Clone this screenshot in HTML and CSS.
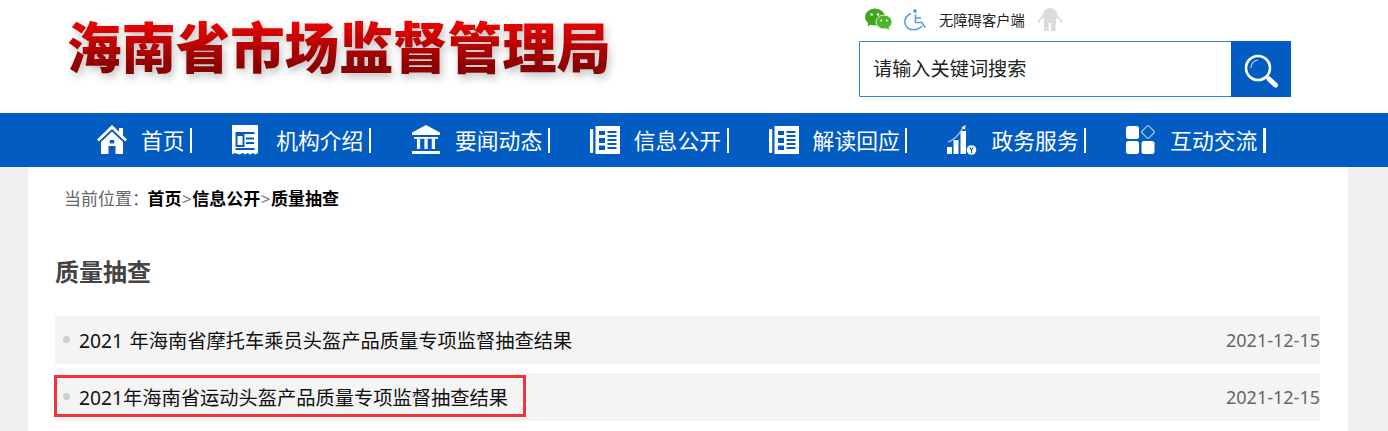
FILE: index.html
```html
<!DOCTYPE html>
<html lang="zh-CN">
<head>
  <meta charset="UTF-8">
  <title>质量抽查 - 海南省市场监督管理局</title>
  <link rel="stylesheet" href="styles.css">
</head>
<body>
  <header class="top">
    <div class="logo">海南省市场监督管理局</div>
    <div class="top-right">
      <div class="tools">
        <svg class="icon-wechat" viewBox="0 0 27 22">
          <ellipse cx="10" cy="9" rx="10" ry="8.6" fill="#3fa51c"/>
          <path d="M3.5 14l-.8 4.5 4.600-3z" fill="#3fa51c"/>
          <ellipse cx="19" cy="14" rx="8" ry="7" fill="#4fb52a" stroke="#fff" stroke-width=".8"/>
          <path d="M23.500 19l1 3-3.600-2z" fill="#4fb52a"/>
          <circle cx="6.600" cy="6.500" r="1.300" fill="#fff"/>
          <circle cx="13" cy="6.500" r="1.300" fill="#fff"/>
          <circle cx="16.200" cy="12.500" r="1.100" fill="#fff"/>
          <circle cx="21.800" cy="12.500" r="1.100" fill="#fff"/>
        </svg>
        <svg class="icon-access" viewBox="0 0 23 23" fill="none" stroke="#5b9ee0" stroke-width="1.600">
          <circle cx="11" cy="3" r="1.900" fill="#5b9ee0" stroke="none"/>
          <path d="M11.500 6.500v8h6.500l3 5"/>
          <path d="M11.500 10h5.500"/>
          <path d="M7 5.500C2.500 7.500.8 11 .8 14c0 4.500 4 7.700 8 7.700 3.500 0 7-1 9-3.700"/>
        </svg>
        <span class="tools-text">无障碍客户端</span>
        <svg class="icon-robot" viewBox="0 0 24 23" fill="#dcdcdc">
          <circle cx="12" cy="7.500" r="7.500"/>
          <rect x="6" y="9" width="12" height="6"/>
          <rect x="6" y="15" width="4.500" height="8"/>
          <rect x="13" y="15" width="4.500" height="8"/>
          <path d="M5 8L.7 12.500V15M19 8l4.300 4.500V15" fill="none" stroke="#dcdcdc" stroke-width="1.800"/>
        </svg>
      </div>
      <div class="search">
        <div class="search-input">请输入关键词搜索</div>
        <div class="search-btn">
          <svg viewBox="0 0 60 56" width="60" height="56" fill="none" stroke="#fff">
            <circle cx="27" cy="27" r="12" stroke-width="2.600"/>
            <path d="M20 27a7.500 7.500 0 0 1 7-8" stroke-width="1.200" stroke-opacity=".7"/>
            <path d="M38 38l6.500 6" stroke-width="5" stroke-linecap="round"/>
          </svg>
        </div>
      </div>
    </div>
  </header>

  <nav class="nav">
    <div class="nav-item">
      <svg viewBox="0 0 30 30" fill="#fff">
        <path d="M15 0L0 14.500l1.800 2L15 4l13.200 12.500 1.800-2-4-3.900V3h-4v3.800z"/>
        <path d="M15 6.500L4 17v12h7.500v-8h7v8H26V17z"/>
        <rect x="12.800" y="15" width="4.400" height="3.400" fill="#035cc2"/>
      </svg>
      <span class="nav-text">首页</span>
    </div>
    <div class="nav-item">
      <svg viewBox="0 0 26 30" fill="#fff" class="icon-narrow">
        <path d="M0 0h26v28l-2.600 1.500-2.600-1.500-2.600 1.500-2.600-1.500-2.600 1.500-2.600-1.500-2.600 1.500L2.600 28 0 29.500z"/>
        <g fill="#035cc2">
          <rect x="3.500" y="7" width="19" height="2"/>
          <rect x="4.500" y="10" width="7" height="11" fill="none" stroke="#035cc2" stroke-width="2"/>
          <rect x="14" y="12.500" width="8" height="2"/>
          <rect x="14" y="17" width="8" height="2"/>
          <rect x="3.500" y="23" width="19" height="2"/>
        </g>
      </svg>
      <span class="nav-text">机构介绍</span>
    </div>
    <div class="nav-item">
      <svg viewBox="0 0 30 30" fill="#fff">
        <path d="M15 0L1 7.500V10h28V7.500z"/>
        <rect x="3" y="12" width="24" height="1.800"/>
        <rect x="6" y="14" width="3.200" height="10"/>
        <rect x="13.400" y="14" width="3.200" height="10"/>
        <rect x="20.800" y="14" width="3.200" height="10"/>
        <rect x="1" y="26" width="28" height="3"/>
      </svg>
      <span class="nav-text">要闻动态</span>
    </div>
    <div class="nav-item">
      <svg viewBox="0 0 30 30" fill="#fff">
        <rect x="0" y="4" width="3.200" height="24" rx="1"/>
        <path d="M5.500 1H30v28H5.500z"/>
        <g fill="#035cc2">
          <rect x="9" y="6" width="6" height="4"/><rect x="17.500" y="6" width="9" height="2"/><rect x="17.500" y="10" width="9" height="2"/>
          <rect x="9" y="13" width="6" height="5"/><rect x="17.500" y="14" width="9" height="2"/><rect x="17.500" y="18" width="9" height="2"/>
          <rect x="9" y="20.500" width="6" height="4.500"/><rect x="17.500" y="22" width="9" height="2"/>
        </g>
      </svg>
      <span class="nav-text">信息公开</span>
    </div>
    <div class="nav-item">
      <svg viewBox="0 0 30 30" fill="#fff">
        <rect x="0" y="4" width="3.200" height="24" rx="1"/>
        <path d="M5.500 1H30v28H5.500z"/>
        <g fill="#035cc2">
          <rect x="9" y="6" width="6" height="4"/><rect x="17.500" y="6" width="9" height="2"/><rect x="17.500" y="10" width="9" height="2"/>
          <rect x="9" y="13" width="6" height="5"/><rect x="17.500" y="14" width="9" height="2"/><rect x="17.500" y="18" width="9" height="2"/>
          <rect x="9" y="20.500" width="6" height="4.500"/><rect x="17.500" y="22" width="9" height="2"/>
        </g>
      </svg>
      <span class="nav-text">解读回应</span>
    </div>
    <div class="nav-item">
      <svg viewBox="0 0 30 30" fill="#fff">
        <rect x="0" y="22" width="5" height="7"/>
        <rect x="6.500" y="15" width="5" height="14"/>
        <rect x="13.500" y="6" width="5.500" height="23"/>
        <path d="M1 17C8 15 13 8 16.500 2.500" fill="none" stroke="#c9dcf3" stroke-width="1.200"/>
        <path d="M18.500 0l-.3 4.800-3.800-2.400z"/>
        <circle cx="24.500" cy="25" r="4.800"/>
        <path d="M22.800 22.500l1.700 2.600 1.700-2.600M24.500 25v3.200" fill="none" stroke="#035cc2" stroke-width="1.100"/>
      </svg>
      <span class="nav-text">政务服务</span>
    </div>
    <div class="nav-item nav-item-last">
      <svg viewBox="0 0 30 30" fill="#fff">
        <rect x="0" y="1" width="13" height="13" rx="2.500"/>
        <rect x="0" y="16" width="13" height="13" rx="2.500"/>
        <rect x="15.500" y="16" width="13" height="13" rx="2.500"/>
        <rect x="17.200" y="2.200" width="9.600" height="9.600" rx="1" transform="rotate(45 22 7)" fill="none" stroke="#a9c6ea" stroke-width="1.200"/>
      </svg>
      <span class="nav-text">互动交流</span>
    </div>
  </nav>

  <main class="page">
    <div class="crumb">
      <span class="crumb-label">当前位置：</span>
      <b>首页</b><span class="crumb-sep">&gt;</span><b>信息公开</b><span class="crumb-sep">&gt;</span><b>质量抽查</b>
    </div>
    <h2 class="title">质量抽查</h2>
    <ul class="list">
      <li class="row">
        <span class="row-title">2021 年海南省摩托车乘员头盔产品质量专项监督抽查结果</span>
        <span class="row-date">2021-12-15</span>
      </li>
      <li class="row">
        <span class="row-title">2021年海南省运动头盔产品质量专项监督抽查结果</span>
        <span class="row-date">2021-12-15</span>
        <div class="row-mark"></div>
      </li>
    </ul>
  </main>
</body>
</html>
```

FILE: styles.css
```css
* {
  box-sizing: border-box;
}
html, body {
  margin: 0;
  padding: 0;
}
body {
  background: #f0f0f0;
  color: #222;
  font-family: "Noto Sans", "Noto Sans CJK SC", sans-serif;
  overflow: hidden;
}

.top {
  display: flex;
  justify-content: space-between;
  height: 113px;
  padding: 0 97px 0 67px;
  background: #fff;
}
.logo {
  margin-top: 14px;
  height: 62px;
  font-family: "Noto Sans CJK SC", sans-serif;
  font-size: 54.400px;
  font-weight: 900;
  line-height: 62px;
  white-space: nowrap;
  color: transparent;
  background: linear-gradient(#e60404 15%, #8a0202 85%);
  -webkit-background-clip: text;
  background-clip: text;
  filter: drop-shadow(2px 4px 4px rgba(0, 0, 0, .25));
}
.top-right {
  width: 432px;
  padding-top: 7px;
}
.tools {
  display: flex;
  align-items: center;
  height: 24px;
  padding-left: 6px;
}
.icon-wechat {
  width: 27px;
  height: 22px;
}
.icon-access {
  width: 23px;
  height: 23px;
  margin-left: 12px;
}
.icon-robot {
  width: 24px;
  height: 23px;
  margin-left: 13px;
}
.tools-text {
  margin-left: 12px;
  font-size: 14.300px;
  color: #222;
  white-space: nowrap;
}
.search {
  display: flex;
  height: 56px;
  margin-top: 10px;
  border: 1px solid #2a86d6;
  border-radius: 1px;
}
.search-input {
  flex: 1;
  padding-left: 13px;
  font-size: 19.200px;
  line-height: 54px;
  color: #222;
}
.search-btn {
  width: 60px;
  margin: -1px -1px -1px 0;
  background: #035cc2;
}
.search-btn svg {
  display: block;
}

.nav {
  display: flex;
  align-items: center;
  gap: 40px;
  height: 54px;
  padding-left: 97px;
  background: #035cc2;
}
.nav-item {
  display: flex;
  align-items: center;
}
.nav-item svg {
  flex: none;
  width: 30px;
  height: 30px;
  margin-right: 14px;
}
.nav-item .icon-narrow {
  width: 26px;
  margin-right: 18px;
}
.nav-text {
  height: 25px;
  padding-right: 5.600px;
  border-right: 2px solid #fff;
  font-size: 21.800px;
  line-height: 25px;
  color: #fff;
  white-space: nowrap;
}
.nav-item-last .nav-text {
  border-right-width: 3px;
}

.page {
  width: 1320px;
  margin-left: 28px;
  padding: 16px 28px 10px 27px;
  background: #fff;
}
.crumb {
  height: 32px;
  padding-left: 9px;
  font-size: 17px;
  line-height: 32px;
  color: #666;
  white-space: nowrap;
}
.crumb b {
  color: #000;
}
.crumb-label {
  margin-right: -6px;
}
.crumb-sep {
  margin: 0 .5px;
  color: #777;
}
.title {
  margin: 37px 0 24px;
  font-size: 24px;
  font-weight: 700;
  line-height: 40px;
  color: #444;
}
.list {
  margin: 0;
  padding: 0;
  list-style: none;
}
.row {
  position: relative;
  display: flex;
  justify-content: space-between;
  align-items: center;
  height: 48px;
  margin-bottom: 9px;
  padding-left: 24px;
  background: #f4f4f4;
}
.row::before {
  content: "";
  position: absolute;
  left: 8px;
  top: 20px;
  width: 7px;
  height: 7px;
  border-radius: 50%;
  background: #d0d0d0;
}
.row-title {
  font-size: 19.250px;
  word-spacing: 1.500px;
  color: #111;
  white-space: nowrap;
}
.row-date {
  font-size: 18px;
  color: #666;
}
.row-mark {
  position: absolute;
  left: -1px;
  top: 2px;
  width: 472px;
  height: 42px;
  border: 3px solid #f5333a;
}
```
